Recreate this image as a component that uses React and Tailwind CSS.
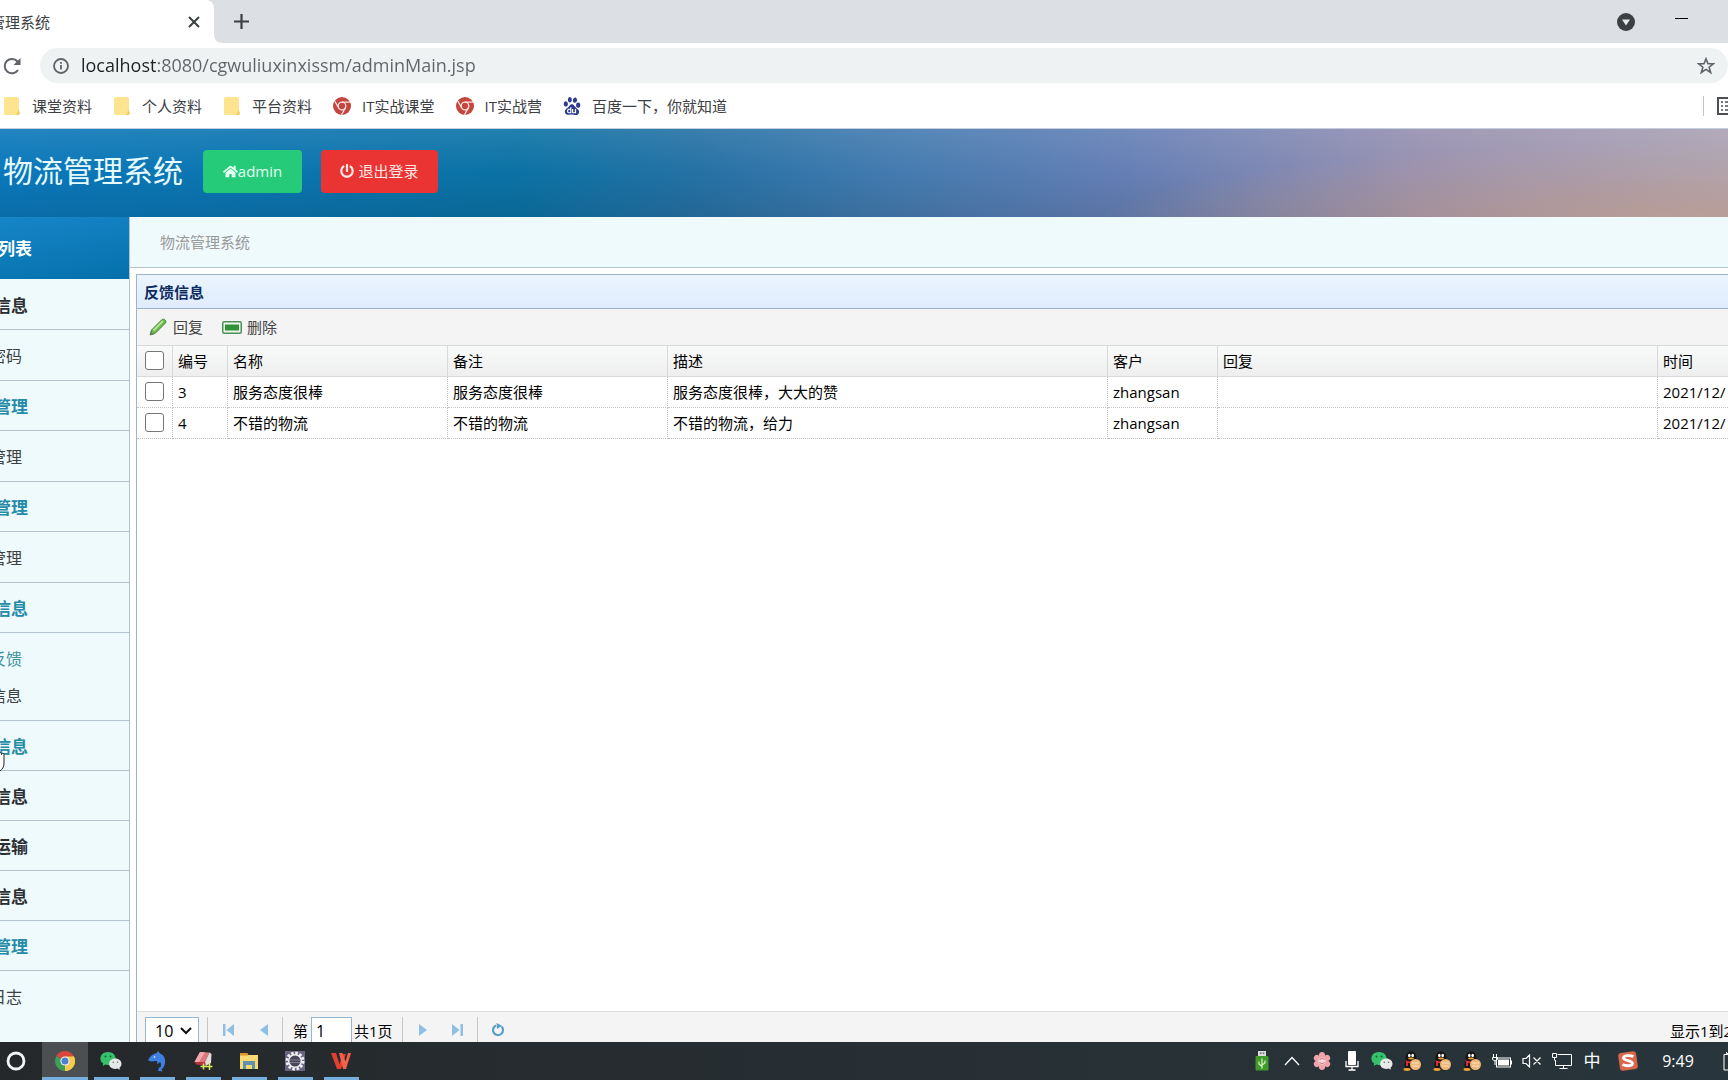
import { useState } from "react";
import { FaHome, FaPowerOff } from "react-icons/fa";
import { SiBaidu } from "react-icons/si";

const FolderIcon = () => (
  <svg viewBox="0 0 18 20" className="w-[18px] h-5">
    <path d="M2.500 1h12a1.500 1.500 0 0 1 1.500 1.500v16.500H2.500A1.500 1.500 0 0 1 1 17.500v-15A1.500 1.500 0 0 1 2.500 1z" fill="#fde48f" />
    <path d="M15 12.500l2 4.500c0 1.500-.8 2-2.500 2h-2c1.700-1 2.500-3 2.500-6.500z" fill="#f3cf62" />
  </svg>
);

const RedChromeIcon = () => (
  <svg viewBox="0 0 18 18" className="w-[18px] h-[18px]">
    <circle cx="9" cy="9" r="9" fill="#c5453f" />
    <circle cx="9" cy="9" r="3.800" fill="none" stroke="#fbe4e2" strokeWidth="1.300" />
    <path d="M9 5.200h8M5.700 10.900L1.700 4M12.300 10.900L8.500 17.800" stroke="#fbe4e2" strokeWidth="1.300" />
  </svg>
);

const ChromeIcon = () => (
  <svg viewBox="0 0 20 20" className="w-5 h-5">
    <path d="M10 10L1.340 5A10 10 0 0 1 18.660 5z" fill="#d8473a" />
    <path d="M10 10L18.660 5A10 10 0 0 1 10 20z" fill="#f6cb4c" />
    <path d="M10 10V20A10 10 0 0 1 1.340 5z" fill="#3f9e57" />
    <path d="M10 5.500h8.900A10 10 0 0 1 10 20l3.900-7.700z" fill="#f6cb4c" />
    <circle cx="10" cy="10" r="4.600" fill="#f4f4f4" />
    <circle cx="10" cy="10" r="3.500" fill="#4a80d4" />
  </svg>
);

const WechatIcon = () => (
  <svg viewBox="0 0 22 20" className="w-[22px] h-5">
    <path d="M8 1c4.300 0 7.600 2.800 7.600 6.400S12.300 14 8 14c-.9 0-1.800-.1-2.600-.4L2.600 15l.6-2.500C1.400 11.300.4 9.500.4 7.400.4 3.800 3.700 1 8 1z" fill="#35c26b" />
    <circle cx="5.500" cy="5.500" r="1" fill="#14643a" />
    <circle cx="10.500" cy="5.500" r="1" fill="#14643a" />
    <path d="M15.300 7.500c3.500 0 6.200 2.300 6.200 5.200 0 1.600-.8 3-2 4l.4 2-2.300-1.100c-.7.200-1.500.300-2.300.300-3.500 0-6.200-2.300-6.200-5.200s2.700-5.200 6.200-5.200z" fill="#e6e9e8" />
    <circle cx="13.300" cy="11.300" r=".8" fill="#6c7573" />
    <circle cx="17.500" cy="11.300" r=".8" fill="#6c7573" />
  </svg>
);

const DolphinIcon = () => (
  <svg viewBox="0 0 20 22" className="w-5 h-[22px]">
    <path d="M1 10.500C3 6 6.500 3.500 9.500 3.300L11 1l2 2.600c4 1.700 5.700 5.200 5 9.400-.4 2.700-1.700 5-3.500 6.500l1.200 2-4.700-.7 1-3.300 1.500-.2c.8-2 .7-4-.5-5.300l-2.500 2.200-.5-3c-2-.5-4 .300-5.500.300z" fill="#3f7fe0" />
    <circle cx="7.500" cy="7" r=".8" fill="#fff" />
  </svg>
);

const BookIcon = () => (
  <svg viewBox="0 0 20 20" className="w-5 h-5">
    <path d="M7 1l9.500.500-4.500 9.500L1.500 11z" fill="#e0777e" />
    <path d="M7 1l5 .300L6 11H1.500z" fill="#f0a9ac" />
    <path d="M16.500 1.500L18.500 3l-.5 9-5.500 3-.5-4z" fill="#e3dcda" />
    <path d="M1.500 11H12l.5 3.500L3 13.500z" fill="#b5343b" />
    <path d="M10.500 12.500v6M7.500 15.500h6M16.500 12v7M13.500 15.500h6" stroke="#d7e85a" strokeWidth="1.500" />
  </svg>
);

const ExplorerIcon = () => (
  <svg viewBox="0 0 20 18" className="w-5 h-[18px]">
    <path d="M1 1h7l1.500 2H19v14H1z" fill="#f9d973" />
    <path d="M1 1h7l1.500 2.500H1z" fill="#d9952c" />
    <path d="M4 17V9h12v8h-3v-4H7v4z" fill="#5f93ad" />
  </svg>
);

const EclipseIcon = () => (
  <svg viewBox="0 0 20 20" className="w-5 h-5">
    <rect width="20" height="20" fill="#6b6480" />
    <circle cx="10" cy="10" r="8" fill="none" stroke="#f0f0f2" strokeWidth="3" strokeDasharray="2.600 1.590" />
    <circle cx="10" cy="10" r="6.300" fill="#49465a" stroke="#f0f0f2" strokeWidth="1.500" />
    <path d="M4.800 9h10.400M4.800 11.500h10.400" stroke="#7c7990" />
  </svg>
);

const WpsIcon = () => (
  <svg viewBox="0 0 20 16" className="w-5 h-4">
    <path d="M0 0h5l3.500 11L12 1h3l-5 15H6z" fill="#e2402f" />
    <path d="M8 0h3.500l3 8.500L17 0h3l-5 16h-3z" fill="#f4604c" />
  </svg>
);

const UsbIcon = () => (
  <svg viewBox="0 0 14 20" className="w-3.5 h-5">
    <rect x="3" y="0" width="8" height="5" fill="#d9dcd8" />
    <rect x="5" y="1.500" width="1.500" height="1.500" fill="#666" />
    <rect x="7.800" y="1.500" width="1.500" height="1.500" fill="#666" />
    <rect x=".5" y="5" width="13" height="14.500" rx="1" fill="#3f9c2c" />
    <path d="M7 7.500v10M7 15.500L4 13v-2.500M7 14l3-2v-2.500" fill="none" stroke="#dff2c8" strokeWidth="1.200" />
  </svg>
);

const FlowerIcon = () => (
  <svg viewBox="0 0 18 18" className="w-[18px] h-[18px]">
    {[0, 60, 120, 180, 240, 300].map((deg) => (
      <ellipse key={deg} cx="9" cy="3.800" rx="3.200" ry="3.800" fill="#f0a3a8" transform={`rotate(${deg} 9 9)`} />
    ))}
    <circle cx="9" cy="9" r="3.500" fill="#fbdadb" />
    <path d="M6.500 8c1-2 4-2 5 0M11.500 10c-1 2-4 2-5 0" fill="none" stroke="#b86c7c" />
  </svg>
);

const MicIcon = () => (
  <svg viewBox="0 0 14 20" className="w-3.5 h-5">
    <rect x="3" y="0" width="8" height="14" rx="1" fill="#fff" />
    <path d="M1 10v5.500h12V10M7 15.500V19M3.500 19h7" fill="none" stroke="#fff" strokeWidth="1.300" />
  </svg>
);

const QQIcon = () => (
  <svg viewBox="0 0 20 20" className="w-5 h-5">
    <path d="M3.500 8C3.500 3 5.500.500 9 .500S14.500 3 14.500 8l1.500 5-3 5H5l-3-3z" fill="#151515" />
    <ellipse cx="7.300" cy="4.500" rx="1.300" ry="1.800" fill="#fff" />
    <ellipse cx="10.700" cy="4.500" rx="1.300" ry="1.800" fill="#fff" />
    <ellipse cx="9" cy="7.500" rx="3" ry=".9" fill="#f0a030" />
    <path d="M3 9c3 1.800 8 1.800 11 0v2c-3 1.500-6 1.500-8 1v3H4v-4z" fill="#d8303a" />
    <ellipse cx="5" cy="18.500" rx="3.500" ry="1.400" fill="#eea42c" />
    <circle cx="13.500" cy="13.500" r="5.500" fill="#efb878" />
    <path d="M10 12h7M10 15h7" stroke="#fbe3c0" />
  </svg>
);

const BatteryIcon = () => (
  <svg viewBox="0 0 20 14" className="w-5 h-3.5" fill="none" stroke="#fff">
    <rect x="4.500" y="4" width="14" height="9" />
    <rect x="6.500" y="6" width="10" height="5" fill="#fff" />
    <path d="M19.500 6.500v4M1.500 0v3M4.500 0v3M.500 3.500h5v2l-2.500 1.500-2.500-1.500zM3 7v4" />
  </svg>
);

const MuteIcon = () => (
  <svg viewBox="0 0 20 14" className="w-5 h-3.5" fill="none" stroke="#fff">
    <path d="M1 4.500h3L7.500 1v12L4 9.500H1zM11.500 3.500l7 7M18.500 3.500l-7 7" strokeWidth="1.200" />
  </svg>
);

const MonitorIcon = () => (
  <svg viewBox="0 0 20 17" className="w-5 h-[17px]" fill="none" stroke="#fff">
    <path d="M5.500 1.500h14v11H3.500V7M11.500 12.500v3M7.500 15.500h8" />
    <path d="M.500.500h4v4h-4zM2.500 4.500v3" />
  </svg>
);

const SogouIcon = () => (
  <svg viewBox="0 0 20 20" className="w-5 h-5">
    <rect x="1" y="1" width="18" height="18" rx="3" fill="#d9674a" transform="rotate(-8 10 10)" />
    <path d="M15.500 5.500C12 4 5.500 4.200 5.500 7s9 2.300 9 5.300-6.500 3-10 1.200" fill="none" stroke="#fff" strokeWidth="2.800" />
  </svg>
);

const PencilIcon = () => (
  <svg viewBox="0 0 18 18" className="w-[18px] h-[18px]">
    <path d="M1 17l1.500-5L13 1.500C14.500.300 18 2.500 16.500 5L6 15.500z" fill="#6cb94c" stroke="#3f8a35" />
    <path d="M4.500 12.500L14 3" stroke="#b9e69b" strokeWidth="1.800" />
    <path d="M1 17l1-3.500 2.500 2.300z" fill="#777" />
  </svg>
);

const RemoveIcon = () => (
  <svg viewBox="0 0 20 13" className="w-5 h-[13px]">
    <rect x=".75" y=".75" width="18.500" height="11.500" rx="1.500" fill="#eef7ea" stroke="#4f8f5c" strokeWidth="1.500" />
    <rect x="3" y="3.500" width="14" height="6" fill="#2d9436" />
  </svg>
);

const bookmarks = [
  { label: "课堂资料", icon: FolderIcon },
  { label: "个人资料", icon: FolderIcon },
  { label: "平台资料", icon: FolderIcon },
  { label: "IT实战课堂", icon: RedChromeIcon },
  { label: "IT实战营", icon: RedChromeIcon },
  { label: "百度一下，你就知道", icon: SiBaidu },
];

const menu = [
  { title: "信息", items: ["密码"] },
  { title: "管理", open: true, items: ["管理"] },
  { title: "管理", open: true, items: ["管理"] },
  { title: "信息", open: true, items: ["反馈", "信息"], active: "反馈" },
  { title: "信息", open: true, items: [] },
  { title: "信息", items: [] },
  { title: "运输", items: [] },
  { title: "信息", items: [] },
  { title: "管理", open: true, items: ["日志"] },
];

const columns = ["编号", "名称", "备注", "描述", "客户", "回复", "时间"];

const rows = [
  ["3", "服务态度很棒", "服务态度很棒", "服务态度很棒，大大的赞", "zhangsan", "", "2021/12/"],
  ["4", "不错的物流", "不错的物流", "不错的物流，给力", "zhangsan", "", "2021/12/"],
];

const apps = [
  { name: "Chrome", icon: ChromeIcon, active: true },
  { name: "WeChat", icon: WechatIcon },
  { name: "Navicat", icon: DolphinIcon },
  { name: "Notes", icon: BookIcon },
  { name: "Explorer", icon: ExplorerIcon },
  { name: "Eclipse", icon: EclipseIcon },
  { name: "WPS", icon: WpsIcon },
];

const BrowserChrome = () => {
  const [url, setUrl] = useState("localhost:8080/cgwuliuxinxissm/adminMain.jsp");

  return (
    <header className="shrink-0 bg-white text-[#3c4043]">
      <div className="flex h-[43px] bg-[#dce0e4]">
        <div className="flex w-[214px] items-center justify-between rounded-tr-lg bg-white pr-[14px]">
          <span className="flex w-[50px] justify-end whitespace-nowrap text-[15px]/5">管理系统</span>
          <button type="button" aria-label="关闭标签页">
            <svg viewBox="0 0 12 12" className="w-3 h-3">
              <path d="M1 1l10 10M11 1L1 11" stroke="#3c4043" strokeWidth="2" />
            </svg>
          </button>
        </div>
        <div className="w-2 self-end bg-white">
          <div className="h-2 rounded-bl-lg bg-[#dce0e4]" />
        </div>
        <button type="button" aria-label="新标签页" className="ml-3">
          <svg viewBox="0 0 15 15" className="w-[15px] h-[15px]">
            <path d="M7.500 0v15M0 7.500h15" stroke="#3c4043" strokeWidth="2.200" />
          </svg>
        </button>
        <button type="button" aria-label="搜索标签页" className="ml-auto">
          <svg viewBox="0 0 18 18" className="w-[18px] h-[18px]">
            <circle cx="9" cy="9" r="9" fill="#3c4043" />
            <path d="M5 6.500h8L9 12.500z" fill="#e6e9ec" />
          </svg>
        </button>
        <button type="button" aria-label="最小化" className="ml-10 mr-10 flex pt-[18px]">
          <span className="block h-px w-[13px] bg-black" />
        </button>
      </div>
      <div className="flex items-center pt-[5px]">
        <button type="button" aria-label="重新加载" className="w-10 pl-[3px]">
          <svg viewBox="0 0 18 18" className="w-[18px] h-[18px]">
            <path d="M15 13A7.200 7.200 0 1 1 14.500 4.500" fill="none" stroke="#5f6368" strokeWidth="2" />
            <path d="M17.500 1v7h-7z" fill="#5f6368" />
          </svg>
        </button>
        <label className="flex h-[35px] flex-1 items-center rounded-full bg-[#eff2f3] pl-[13px] pr-[13px]">
          <svg viewBox="0 0 16 16" className="w-4 h-4">
            <circle cx="8" cy="8" r="7" fill="none" stroke="#5f6368" strokeWidth="1.800" />
            <path d="M8 7v4.500M8 4v1.800" stroke="#5f6368" strokeWidth="1.800" />
          </svg>
          <input
            aria-label="地址"
            value={url}
            onChange={(e) => setUrl(e.target.value)}
            className="ml-3 flex-1 bg-[linear-gradient(90deg,#202124_76px,#5f6368_76px)] bg-clip-text pb-0.5 font-['Open_Sans','Noto_Sans_CJK_SC',sans-serif] text-[18px]/6 text-transparent outline-none"
          />
          <svg viewBox="0 0 18 18" className="w-[18px] h-[18px]">
            <path d="M9 1.800l2 5h5.300l-4.200 3.400 1.600 5.300L9 12.400l-4.700 3.100 1.600-5.300L1.700 6.800H7z" fill="none" stroke="#5f6368" strokeWidth="1.600" />
          </svg>
        </label>
      </div>
      <nav className="flex h-[46px] items-center gap-[21px] overflow-hidden border-b border-[#c5cfe0] pl-[3px] pt-px">
        {bookmarks.map(({ label, icon: Icon }) => (
          <a key={label} href="#" className="flex items-center gap-[11px] whitespace-nowrap text-[15px]/5">
            <Icon size={18} color="#2f3a8f" />
            {label}
          </a>
        ))}
        <div className="ml-auto flex h-5 items-center border-l border-[#c3c6c9] pl-[13px]">
          <svg viewBox="0 0 11 18" className="h-[18px] w-[11px]">
            <path d="M11 1H1v16h10" fill="none" stroke="#4c5054" strokeWidth="2" />
            <path d="M4 5h2M8 5h3M4 9h2M8 9h3M4 13h2M8 13h3" stroke="#4c5054" strokeWidth="1.500" />
          </svg>
        </div>
      </nav>
    </header>
  );
};

const Banner = () => (
  <div className="flex h-[88px] shrink-0 items-center bg-[radial-gradient(ellipse_35%_100%_at_98%_115%,#c8a393cc,transparent),linear-gradient(180deg,#ffffff18,transparent_50%,#00000018),linear-gradient(97deg,#0b78bb,#0b72a5_30%,#2471a4_40%,#447bb0_52%,#657fb5_65%,#9790b0_82%,#aba3b3)] pb-1 pl-[3px]">
    <h1 className="text-[30px]/10 text-[#e6fbff]">物流管理系统</h1>
    <button
      type="button"
      className="ml-5 flex h-[43px] w-[99px] items-center justify-center rounded bg-[#25cb79] text-[15px]/5 text-[#e6fff2]"
    >
      <FaHome />
      admin
    </button>
    <button
      type="button"
      className="ml-[19px] flex h-[43px] w-[117px] items-center justify-center gap-1 rounded bg-[#e93433] text-[15px]/5 text-[#ffe9e6]"
    >
      <FaPowerOff size={14} />
      退出登录
    </button>
  </div>
);

const Sidebar = () => (
  <aside className="w-[130px] shrink-0 overflow-hidden border-r border-[#b3c3cc] bg-[#effafd]">
    <h2 className="flex h-[62px] items-center bg-linear-170 from-[#1686c8] to-[#0570ab] pt-px text-[17px]/6 font-bold text-white">
      <span className="flex w-8 justify-end whitespace-nowrap">列表</span>
    </h2>
    {menu.map(({ title, open, items, active }, i) => (
      <div key={i} className="first-of-type:pt-px">
        <button
          type="button"
          className={`flex h-[50px] w-full items-center border-b border-[#b3c3cc] pt-0.5 text-[17px]/6 font-bold ${
            open ? "text-[#258ba9]" : "text-[#2b2f33]"
          }`}
        >
          <span className="flex w-7 justify-end whitespace-nowrap">{title}</span>
        </button>
        {items.length > 0 && (
          <ul className={`pt-[7px] pb-[6px] ${i < menu.length - 1 ? "border-b border-[#b3c3cc]" : ""}`}>
            {items.map((item) => (
              <li key={item}>
                <a
                  href="#"
                  className={`flex h-[37px] items-center text-[16px]/6 ${
                    item === active ? "text-[#3a919f]" : "text-[#3c4043]"
                  }`}
                >
                  <span className="flex w-[22px] justify-end whitespace-nowrap">{item}</span>
                </a>
              </li>
            ))}
          </ul>
        )}
      </div>
    ))}
  </aside>
);

const CheckBox = ({ label }) => (
  <input
    type="checkbox"
    aria-label={label}
    className="mx-auto block h-[19px] w-[19px] appearance-none rounded-[3px] border border-[#767676] bg-white checked:bg-[#0075ff]"
  />
);

const cellBorder = "border-r border-b border-dotted border-[#c4c4c4] last:border-r-0";

const DataGrid = () => (
  <table className="w-full table-fixed border-separate border-spacing-0 text-[15px]/5 text-black">
    <colgroup>
      <col className="w-9" />
      <col className="w-[55px]" />
      <col className="w-[220px]" />
      <col className="w-[220px]" />
      <col className="w-[440px]" />
      <col className="w-[110px]" />
      <col className="w-[440px]" />
      <col />
    </colgroup>
    <thead>
      <tr className="h-8 bg-linear-to-b from-[#f9fafa] to-[#eeeeee]">
        <th className="border-y border-r border-[#d9d9d9] pb-px">
          <CheckBox label="全选" />
        </th>
        {columns.map((name) => (
          <th
            key={name}
            className="border-y border-r border-[#d9d9d9] px-[5px] text-left font-normal last:border-r-0"
          >
            {name}
          </th>
        ))}
      </tr>
    </thead>
    <tbody>
      {rows.map((row) => (
        <tr key={row[0]} className="h-[31px]">
          <td className={`${cellBorder} pb-px`}>
            <CheckBox label={`选择 ${row[0]}`} />
          </td>
          {row.map((text, i) => (
            <td key={i} className={`${cellBorder} overflow-hidden whitespace-nowrap pl-[5px]`}>
              {text}
            </td>
          ))}
        </tr>
      ))}
    </tbody>
  </table>
);

const PageArrow = ({ label, d }) => (
  <button type="button" aria-label={label} className="flex w-8 justify-center pt-1.5">
    <svg viewBox="0 0 14 14" className="w-3.5 h-3.5" fill="#8fbfe3">
      <path d={d} />
    </svg>
  </button>
);

const Divider = () => <div className="w-px bg-[#c6c6c6]" />;

const Pager = () => (
  <div className="flex h-[31px] shrink-0 overflow-hidden border-t border-[#dddddd] bg-[#f4f4f4] pl-2 pt-[5px] text-[15px]/7 text-black">
    <div className="grid h-[27px] w-[54px] items-center border border-[#95b8d0] bg-white">
      <select
        aria-label="每页条数"
        className="col-start-1 row-start-1 h-[25px] appearance-none pl-[9px] text-[16px]/6 outline-none"
      >
        <option>10</option>
        <option>20</option>
      </select>
      <svg viewBox="0 0 12 8" className="pointer-events-none col-start-1 row-start-1 mr-1.5 h-2 w-3 justify-self-end">
        <path d="M1 1l5 5 5-5" fill="none" stroke="#111" strokeWidth="2" />
      </svg>
    </div>
    <div className="ml-2 flex">
      <Divider />
      <div className="flex w-[74px] gap-[3px] pl-[5px]">
        <PageArrow label="首页" d="M1 1h2.500v12H1zM12 1v12L4.500 7z" />
        <PageArrow label="上一页" d="M11 1v12L3 7z" />
      </div>
      <Divider />
    </div>
    <label className="flex pl-2.5">
      第
      <input
        defaultValue="1"
        className="ml-[3px] h-[27px] w-[41px] border border-[#95b8d0] bg-white px-1 text-[16px]/6 outline-none"
      />
    </label>
    <span className="pl-[2px] pr-[9px]">共1页</span>
    <div className="flex">
      <Divider />
      <div className="flex w-[74px] gap-[3px] pl-1">
        <PageArrow label="下一页" d="M3 1v12l8-6z" />
        <PageArrow label="末页" d="M1 1v12l7.500-6zM9.500 1H12v12H9.500z" />
      </div>
      <Divider />
    </div>
    <button type="button" aria-label="刷新" className="flex pl-[13px] pt-1.5">
      <svg viewBox="0 0 14 14" className="w-3.5 h-3.5">
        <path d="M10.500 3.500A5 5 0 1 1 5 2.500" fill="none" stroke="#5a9fc8" strokeWidth="2.200" />
        <path d="M5.500 0l5.500 2.800L6 6z" fill="#5a9fc8" />
      </svg>
    </button>
    <span className="ml-auto w-[58px] overflow-hidden whitespace-nowrap">显示1到2</span>
  </div>
);

const Taskbar = () => (
  <footer className="flex h-[38px] shrink-0 items-center overflow-hidden bg-linear-to-r from-[#25282a] to-[#28353c] text-white">
    <button type="button" aria-label="Cortana" className="w-[42px] pl-[6px]">
      <svg viewBox="0 0 20 20" className="w-5 h-5">
        <circle cx="10" cy="10" r="8" fill="none" stroke="#f4f4f4" strokeWidth="2.800" />
      </svg>
    </button>
    {apps.map(({ name, icon: Icon, active }) => (
      <button
        key={name}
        type="button"
        aria-label={name}
        className={`flex h-full w-[46px] flex-col items-center ${active ? "bg-[#4c4f51]" : ""}`}
      >
        <span className="flex flex-1 items-center pt-[3px]">
          <Icon />
        </span>
        <span className={`h-[3px] bg-[#76aedd] ${active ? "w-full" : "w-[35px]"}`} />
      </button>
    ))}
    <div className="ml-auto flex items-center">
      {[UsbIcon, null, FlowerIcon, MicIcon, WechatIcon, QQIcon, QQIcon, QQIcon, BatteryIcon, MuteIcon, MonitorIcon].map(
        (Icon, i) => (
          <span key={i} className="flex w-[30px] justify-center">
            {Icon ? (
              <Icon />
            ) : (
              <svg viewBox="0 0 16 10" className="w-4 h-2.5">
                <path d="M1 9l7-7.500L15 9" fill="none" stroke="#fff" strokeWidth="1.300" />
              </svg>
            )}
          </span>
        )
      )}
      <span className="w-[30px] text-center text-[17px]/6">中</span>
      <span className="flex w-[41px] justify-center">
        <SogouIcon />
      </span>
      <time className="w-[60px] text-center text-[16px]/6">9:49</time>
      <svg viewBox="0 0 5 20" className="ml-[15px] h-5 w-[5px]">
        <path d="M5 2.500H3.500V1M1 19V3.500h4M1 19h4" fill="none" stroke="#fff" />
      </svg>
    </div>
  </footer>
);

const App = () => (
  <div className="relative flex h-screen flex-col overflow-hidden bg-white font-['Open_Sans','Noto_Sans_CJK_SC',sans-serif]">
    <BrowserChrome />
    <Banner />
    <div className="flex min-h-0 flex-1">
      <Sidebar />
      <main className="flex min-w-0 flex-1 flex-col">
        <div className="flex h-[51px] shrink-0 items-center border-b border-[#b3c3cc] bg-[#effafd] pl-[30px] text-[15px]/5 text-[#999999]">
          物流管理系统
        </div>
        <section className="ml-1.5 mt-1.5 flex min-h-0 flex-1 flex-col border-l border-t border-[#9fb4c8]">
          <h2 className="flex h-[34px] shrink-0 items-center border-b border-[#9fb4c8] bg-linear-to-b from-[#eaf5ff] to-[#e0ebfd] pl-[7px] text-[15px]/5 font-bold text-[#0e2d5f]">
            反馈信息
          </h2>
          <div className="flex h-9 shrink-0 items-center bg-[#f4f4f4] pl-3 text-[15px]/5 text-[#444444]">
            <button type="button" className="flex items-center gap-[6px]">
              <PencilIcon />
              回复
            </button>
            <button type="button" className="ml-[19px] flex items-center gap-[5px]">
              <RemoveIcon />
              删除
            </button>
          </div>
          <div className="min-h-0 flex-1 overflow-hidden">
            <DataGrid />
          </div>
          <Pager />
        </section>
      </main>
    </div>
    <Taskbar />
    {/* hand cursor, mostly past the left edge */}
    <svg viewBox="0 0 5 22" className="pointer-events-none absolute left-0 top-[751px] h-[22px] w-[5px]">
      <path d="M0 2c1-1 1.500 0 1.500 1.500C2.500 1.500 4 2 4 4v8c0 4-1.500 6-4 8" fill="#fff" stroke="#222" />
    </svg>
  </div>
);

export default App;
